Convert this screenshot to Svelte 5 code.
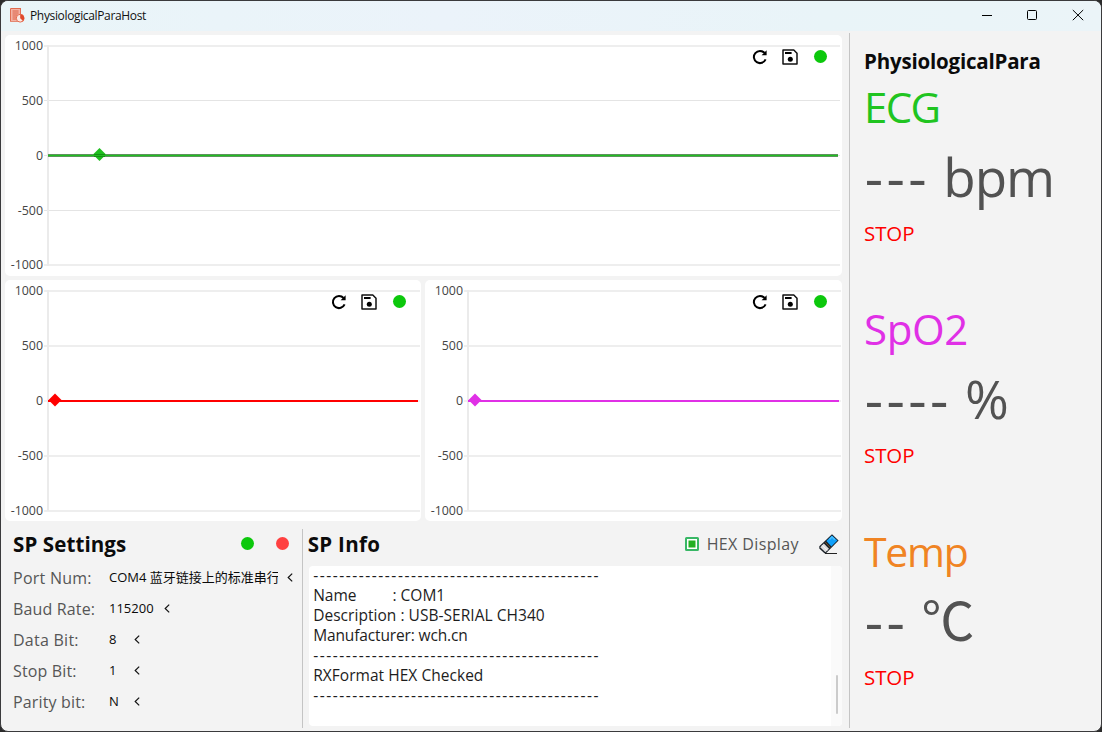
<script>
  const ticks = ['1000', '500', '0', '-500', '-1000'];
  const charts = [
    { id: 'ecg', width: 837, ys: [11, 65.5, 120.5, 175.5, 230], weights: [2, 1, 1, 1, 2], color: '#1fbf1f', shadow: '#5b935b', end: 833, cursor: [94.5, 119.5] },
    { id: 'temp', width: 416, ys: [11, 66, 121, 176, 231], weights: [2, 2, 1, 2, 2], color: '#ff0000', end: 413, cursor: [50, 120] },
    { id: 'spo2', width: 417, ys: [11, 66, 121, 176, 231], weights: [2, 2, 1, 2, 2], color: '#e030e6', end: 414, cursor: [50, 120] }
  ];
  const settings = [
    { label: 'Port Num:', value: 'COM4 蓝牙链接上的标准串行', width: 169, ls: 0.25 },
    { label: 'Baud Rate:', value: '115200', width: 46, ls: 0.15 },
    { label: 'Data Bit:', value: '8', width: 16, ls: 0.25 },
    { label: 'Stop Bit:', value: '1', width: 16, ls: 0.15 },
    { label: 'Parity bit:', value: 'N', width: 16, ls: 0.15 }
  ];
  const rule = '-'.repeat(44);
  const vitals = [
    { name: 'ECG', dashes: '---', unit: 'bpm', cls: 'ecg' },
    { name: 'SpO2', dashes: '----', unit: '%', cls: 'spo2' },
    { name: 'Temp', dashes: '--', unit: '℃', cls: 'temp' }
  ];
</script>

{#snippet chart(c)}
  <section class="card {c.id}">
    <svg class="plot" width={c.width} height="241" viewBox="0 0 {c.width} 241">
      {#each ticks as t, i}
        <rect x="39" y={c.ys[i] - c.weights[i] / 2} width={c.end - 37} height={c.weights[i]} fill={c.weights[i] === 1 ? '#e4e4e4' : '#eeeeee'} />
        <text class="tick" x="38" y={Math.round(c.ys[i]) + 4} text-anchor="end">{t}</text>
      {/each}
      <rect x="42" y="10" width="2" height="221" fill="#ebebeb" />
      {#if c.shadow}
        <rect x="43" y="119" width={c.end - 43} height="3" fill={c.shadow} />
        <rect x="43" y="120" width={c.end - 43} height="1" fill={c.color} />
      {:else}
        <rect x="43" y="120" width={c.end - 43} height="2" fill={c.color} />
      {/if}
      <path d="M{c.cursor[0]} {c.cursor[1] - 6.5}l6.5 6.5l-6.5 6.5l-6.5 -6.5z" fill={c.color} />
      {#if c.shadow}
        <rect x="89" y="119" width="11" height="1" fill="#158f15" />
        <rect x="89" y="121" width="11" height="1" fill="#158f15" />
      {/if}
    </svg>
    <div class="tools">
      <svg width="16" height="16" viewBox="0 0 16 16">
        <path d="M13.6 10.4A6.1 6.1 0 1 1 12.6 4" fill="none" stroke="#000" stroke-width="2" />
        <path d="M14.6 1.2V6.3H9.6z" fill="#000" />
      </svg>
      <svg width="16" height="16" viewBox="0 0 16 16">
        <path d="M1 1H11.8L15 4.2V15H1z" fill="none" stroke="#111" stroke-width="1.5" stroke-linejoin="round" />
        <rect x="3" y="3" width="6.6" height="2" fill="#000" />
        <circle cx="8.3" cy="10.3" r="2.5" fill="#000" />
      </svg>
      <i class="dot green"></i>
    </div>
  </section>
{/snippet}

<div class="window">
  <header>
    <svg class="logo" width="15" height="15" viewBox="0 0 15 15">
      <path d="M.6 .6H10.4V6M8 13.2H.6V.6" fill="#f7c8bd" stroke="#e0694c" stroke-width="1.1" />
      <path d="M1 1H10V7L7 9V13H1z" fill="#f3b3a5" />
      <path d="M2.5 3H8.6M2.5 5H8.6M2.5 7H7.5M2.5 9H6.5M2.5 11H6.5" stroke="#dc6044" />
      <circle cx="10.2" cy="10.2" r="3.9" fill="#fbe9e4" stroke="#e46a4d" />
      <path d="M10.2 10.2V6.3A3.9 3.9 0 0 1 13 13z" fill="#e0492b" />
    </svg>
    <h1>PhysiologicalParaHost</h1>
    <svg class="controls" width="104" height="12" viewBox="0 0 104 12" fill="none" stroke="#000">
      <path d="M1 6.5H11" />
      <rect x="46.5" y="1.5" width="9" height="9" rx="1" />
      <path d="M91.8 1L102.2 11.2M102.2 1L91.8 11.2" />
    </svg>
  </header>

  <div class="body">
    <main>
      {@render chart(charts[0])}
      <div class="pair">
        {@render chart(charts[1])}
        {@render chart(charts[2])}
      </div>
      <div class="bottom">
        <section class="settings">
          <div class="head">
            <h2>SP Settings</h2>
            <i class="dot green"></i>
            <i class="dot red"></i>
          </div>
          {#each settings as s}
            <div class="row">
              <span class="label" style:letter-spacing="{s.ls}px">{s.label}</span>
              <span class="value" style:width="{s.width}px">{s.value}</span>
              <svg width="6" height="9" viewBox="0 0 6 9"><path d="M5.2 .6L1.2 4.5L5.2 8.4" fill="none" stroke="#111" stroke-width="1.2" /></svg>
            </div>
          {/each}
        </section>
        <section class="info">
          <div class="head">
            <h2>SP Info</h2>
            <svg class="check" width="14" height="14" viewBox="0 0 14 14">
              <rect x="1" y="1" width="12" height="12" rx=".5" fill="#fff" stroke="#38b765" stroke-width="2" />
              <rect x="3.5" y="3.5" width="7" height="7" fill="#22b022" />
            </svg>
            <span class="hex">HEX Display</span>
            <svg class="eraser" width="22" height="22" viewBox="0 0 22 22">
              <path d="M1.3 13.3L14 1.3L20.6 7.6L8 20.2H6.4L1.3 15.4z" fill="#1a2028" />
              <path d="M8.4 8.1L13.9 2.6L19.4 7.6L13.4 13.6z" fill="#10a0fa" />
              <path d="M11.5 6.4L14 4L16.8 6.7" fill="none" stroke="#4cc0ff" stroke-width="1.4" />
              <path d="M7.2 9.2L12.3 14.6" stroke="#7a5a2c" stroke-width=".9" />
              <path d="M5.8 10.4L11 15.8L7.4 19.3L2.2 14.3z" fill="#dcdcdc" />
              <path d="M4 12.2L9.2 17.4" stroke="#f8f8f8" />
              <path d="M7 20.5H19" stroke="#222" />
            </svg>
          </div>
          <div class="log">
            <pre><span class="rule">{rule}</span>
Name<span class="gap"></span>: COM1
<span class="desc">Description : USB-SERIAL CH340</span>
<span class="man">Manufacturer: wch.cn</span>
<span class="rule">{rule}</span>
<span class="rx">RXFormat HEX Checked</span>
<span class="rule">{rule}</span></pre>
            <div class="track"><div class="thumb"></div></div>
          </div>
        </section>
      </div>
    </main>

    <aside>
      <h2>PhysiologicalPara</h2>
      {#each vitals as v}
        <section class="vital {v.cls}">
          <div class="name">{v.name}</div>
          <div class="reading"><span class="dashes">{v.dashes}</span> <span class="unit">{v.unit}</span></div>
          <div class="stop">STOP</div>
        </section>
      {/each}
    </aside>
  </div>
</div>

<style>
  :global(body) { background: #2b2b2b; overflow: hidden; }
  * { box-sizing: border-box; }
  h1, h2, pre { margin: 0; }
  svg { display: block; flex: none; }
  .window {
    width: 1102px; height: 732px; overflow: hidden;
    border: 1px solid #3a3a3c; border-radius: 8px; background: #f3f3f3;
    font-family: 'Open Sans', 'Noto Sans CJK SC', sans-serif;
    display: flex; flex-direction: column; white-space: nowrap;
  }
  header {
    height: 30px; flex: none; display: flex; align-items: center; padding: 0 16px 2px 9px;
    background: linear-gradient(90deg, #e9f5f8, #ebf3fa 40%, #e9f4f8 75%, #ebf4f8);
  }
  h1 { font-size: 12px; font-weight: 400; margin-left: 5px; padding-top: 2px; line-height: 20px; letter-spacing: -0.35px; color: #111; }
  .controls { margin-left: auto; }
  .body { flex: 1; display: flex; min-height: 0; }
  main { width: 845px; padding: 4px 4px 0; display: flex; flex-direction: column; gap: 4px; }
  .pair { display: flex; gap: 4px; }
  .card { position: relative; height: 241px; background: #fff; border-radius: 5px; overflow: hidden; }
  .tick { font-size: 12.4px; fill: #444; }
  .tools { position: absolute; top: 14px; right: 15.5px; display: flex; gap: 14px; align-items: center; }
  .tools .dot { margin: -1px 0 0 1.5px; }
  .dot { width: 13px; height: 13px; border-radius: 50%; flex: none; }
  .green { background: #0cc80c; }
  .red { background: #ff4040; }
  .bottom { flex: 1; display: flex; padding-top: 4px; }
  h2 { font-size: 20.5px; font-weight: 700; line-height: 30px; color: #0b0b0b; letter-spacing: 0.1px; }
  .head { display: flex; align-items: center; height: 30px; }
  .settings { width: 298px; height: 199px; border-right: 1px solid #c4c4c4; padding-left: 8px; }
  .settings h2 { width: 227.5px; }
  .settings .red { margin-left: 22.5px; }
  .settings .dot { margin-top: -1px; }
  .settings .head { margin-bottom: 3px; }
  .row { height: 31px; display: flex; align-items: center; }
  .label { width: 96px; font-size: 16px; color: #565656; }
  .value { font-size: 13px; color: #0a0a0a; overflow: hidden; margin-right: 9px; line-height: 20px; padding-bottom: 1px; }
  .info { padding-left: 5px; width: 540px; }
  .info h2 { width: 377px; letter-spacing: 0.3px; }
  .hex { font-size: 16px; color: #565656; margin-left: 8px; width: 111px; letter-spacing: 0.38px; }
  .log { display: flex; justify-content: space-between; width: 533px; height: 160px; margin: 7px 0 0 1px; background: #fff; border-radius: 4px; }
  pre { font: inherit; font-size: 15.5px; line-height: 20px; color: #1d1d1d; padding-left: 4.5px; margin-top: -1px; white-space: pre; }
  .rule { letter-spacing: 1.53px; }
  .gap { display: inline-block; width: 36px; }
  .desc { letter-spacing: 0.04px; }
  .man { letter-spacing: -0.14px; }
  .rx { letter-spacing: 0.04px; }
  .track { width: 11px; background: #fafafa; padding: 109px 0 0 5px; border-radius: 0 4px 4px 0; }
  .thumb { width: 2px; height: 39px; background: #cbcbcb; border-radius: 1px; }
  aside { flex: 1; margin: 2px 0 3px 3px; border-left: 1px solid #c4c4c4; padding: 13px 0 0 14px; }
  aside h2 { letter-spacing: -0.2px; margin-bottom: 1px; }
  .vital { height: 222px; }
  .name { font-size: 42px; line-height: 60px; height: 60px; }
  .reading { display: flex; gap: 13.8px; font-size: 53px; line-height: 80px; height: 83px; color: #525252; }
  .dashes { font-size: 57px; letter-spacing: 3.4px; margin: -1.5px -0.6px 0 0.8px; }
  .stop { font-size: 20.5px; line-height: 26px; color: #ff0000; letter-spacing: -0.1px; }
  .ecg .name { color: #20c420; letter-spacing: -1.6px; }
  .spo2 .name { color: #e030e6; letter-spacing: -0.4px; }
  .temp .name { color: #f08423; letter-spacing: -1.3px; font-size: 41px; }
  .ecg .unit { letter-spacing: -1px; }
</style>
